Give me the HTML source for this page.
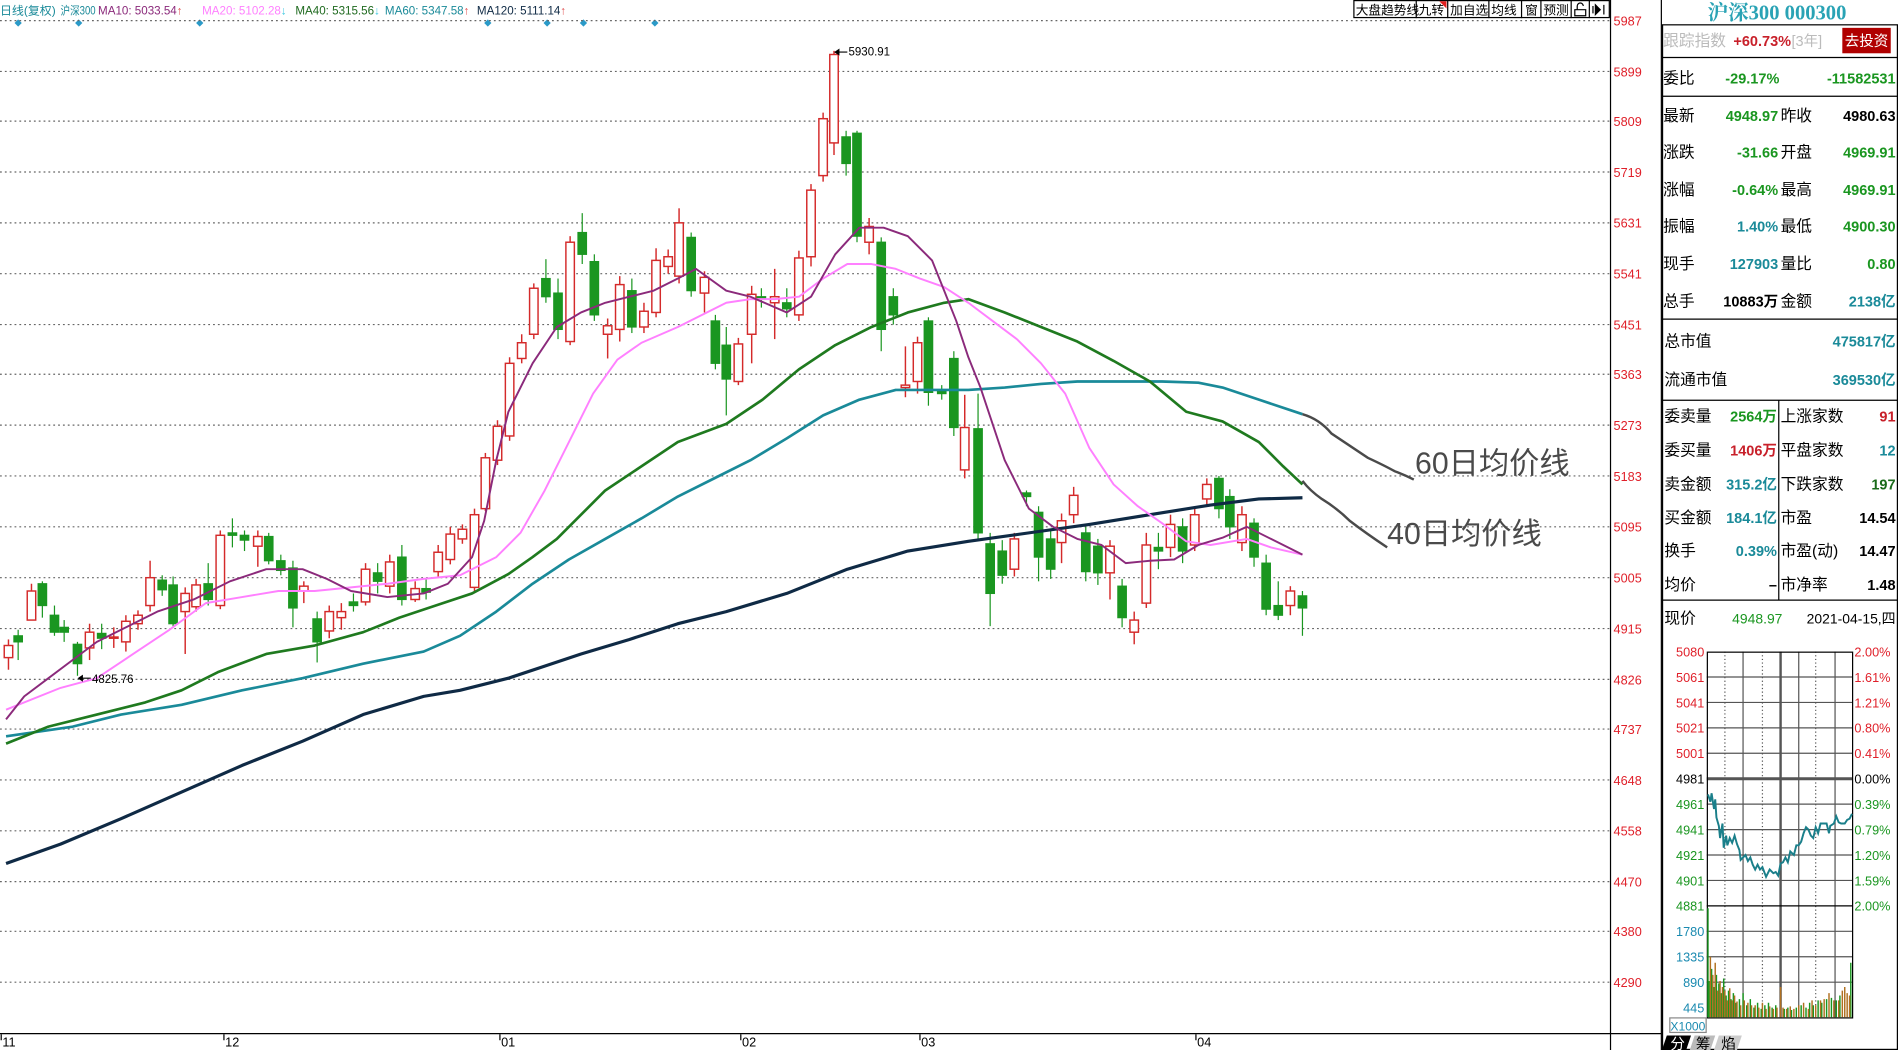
<!DOCTYPE html>
<html><head><meta charset="utf-8"><style>
html,body{margin:0;padding:0;background:#fff;overflow:hidden}
svg{display:block}
text{font-family:"Liberation Sans","Noto Sans CJK SC",sans-serif}
.ax{font-size:10.5px;fill:#e0202a}
.g{stroke:#1a9620;fill:#1a9620;stroke-width:1}
.r{stroke:#d42a2a;fill:#fff;stroke-width:1.2}
.rl{font-size:13px;fill:#000}
</style></head><body>
<svg width="1898" height="1050" viewBox="0 0 1568 867" preserveAspectRatio="none" xmlns="http://www.w3.org/2000/svg">
<rect width="1568" height="867" fill="#fff"/>
<!-- header -->
<g font-size="9.6">
<text x="0" y="12" fill="#1a8a99" textLength="46" lengthAdjust="spacingAndGlyphs">日线(复权)</text>
<text x="50" y="12" fill="#1a8a99" textLength="29" lengthAdjust="spacingAndGlyphs">沪深300</text>
<text x="81" y="12"><tspan fill="#8b2a7b">MA10: 5033.54</tspan><tspan fill="#e05050">↑</tspan></text>
<text x="167" y="12"><tspan fill="#ff80ff">MA20: 5102.28</tspan><tspan fill="#40c8e0">↓</tspan></text>
<text x="244" y="12"><tspan fill="#1f6a1f">MA40: 5315.56</tspan><tspan fill="#40c8e0">↓</tspan></text>
<text x="318" y="12"><tspan fill="#1a8a99">MA60: 5347.58</tspan><tspan fill="#e05050">↑</tspan></text>
<text x="394" y="12"><tspan fill="#0f2a45">MA120: 5111.14</tspan><tspan fill="#e05050">↑</tspan></text>
</g>
<g fill="#2a9ac8"><path d="M15 16l3 3-3 3-3-3z M65 16l3 3-3 3-3-3z M165 16l3 3-3 3-3-3z M403 16l3 3-3 3-3-3z M452 16l3 3-3 3-3-3z M482 16l3 3-3 3-3-3z M541 16l3 3-3 3-3-3z"/></g>
<!-- grid -->
<g stroke="#666" stroke-width="1" stroke-dasharray="1.5 2.5">
<path d="M0 17H1330M0 59H1330M0 100H1330M0 142H1330M0 184H1330M0 226H1330M0 268H1330M0 309H1330M0 351H1330M0 393H1330M0 435H1330M0 477H1330M0 519H1330M0 561H1330M0 602H1330M0 644H1330M0 686H1330M0 728H1330M0 769H1330M0 811H1330"/>
</g>
<!-- toolbar -->
<g font-size="10.5" fill="#000">
<rect x="1118.5" y="0.5" width="211" height="14" fill="#fff" stroke="#000"/>
<path d="M1170 0V15M1196 0V15M1230 0V15M1257 0V15M1273 0V15M1298 0V15M1313 0V15" stroke="#000"/>
<path d="M1189 1h6v6z" fill="#e02020"/>
<text x="1120" y="12">大盘趋势线</text><text x="1172" y="12">九转</text><text x="1198" y="12">加自选</text><text x="1232" y="12">均线</text><text x="1260" y="12">窗</text><text x="1275" y="12">预测</text>
<path d="M1301 13V8h9v5zM1303 8V5a2.5 2.5 0 0 1 5 0" fill="none" stroke="#000"/>
<path d="M1316 5v6M1318 4l4 4-4 4zM1325 4v8" stroke="#000" fill="#000"/>
</g>
<!-- axis -->
<path d="M1330.5 0V867M0 853.5H1372M1372.5 0V867" stroke="#000" fill="none"/>
<g class="ax">
<text x="1333" y="21">5987</text><text x="1333" y="63">5899</text><text x="1333" y="104">5809</text><text x="1333" y="146">5719</text><text x="1333" y="188">5631</text><text x="1333" y="230">5541</text><text x="1333" y="272">5451</text><text x="1333" y="313">5363</text><text x="1333" y="355">5273</text><text x="1333" y="397">5183</text><text x="1333" y="439">5095</text><text x="1333" y="481">5005</text><text x="1333" y="523">4915</text><text x="1333" y="565">4826</text><text x="1333" y="606">4737</text><text x="1333" y="648">4648</text><text x="1333" y="690">4558</text><text x="1333" y="732">4470</text><text x="1333" y="773">4380</text><text x="1333" y="815">4290</text>
</g>
<g font-size="10.5" fill="#000">
<path d="M1 854v5M185 854v5M413 854v5M612 854v5M760 854v5M988 854v5" stroke="#000"/>
<text x="2" y="864">11</text><text x="186" y="864">12</text><text x="414" y="864">01</text><text x="613" y="864">02</text><text x="761" y="864">03</text><text x="989" y="864">04</text>
</g>
<!-- candles -->
<g id="c">
<g class="r"><path d="M7 528V553"/><rect x="3.5" y="533" width="7" height="10"/></g>
<g class="g"><path d="M15 520V545"/><rect x="11.5" y="525" width="7" height="5"/></g>
<g class="r"><path d="M26 482V512"/><rect x="22.5" y="488" width="7" height="24"/></g>
<g class="g"><path d="M35 480V510"/><rect x="31.5" y="482" width="7" height="18"/></g>
<g class="g"><path d="M45 500V525"/><rect x="41.5" y="508" width="7" height="14"/></g>
<g class="g"><path d="M53 512V530"/><rect x="49.5" y="518" width="7" height="4"/></g>
<g class="g"><path d="M64 530V558"/><rect x="60.5" y="532" width="7" height="16"/></g>
<g class="r"><path d="M74 515V545"/><rect x="70.5" y="522" width="7" height="13"/></g>
<g class="g"><path d="M84 515V536"/><rect x="80.5" y="523" width="7" height="4"/></g>
<g class="r"><path d="M94 518V535"/><rect x="90.5" y="526" width="7" height="1"/></g>
<g class="r"><path d="M104 508V538"/><rect x="100.5" y="513" width="7" height="17"/></g>
<g class="r"><path d="M114 504V520"/><rect x="110.5" y="508" width="7" height="7"/></g>
<g class="r"><path d="M124 463V505"/><rect x="120.5" y="477" width="7" height="23"/></g>
<g class="g"><path d="M134 475V492"/><rect x="130.5" y="479" width="7" height="8"/></g>
<g class="g"><path d="M143 476V518"/><rect x="139.5" y="483" width="7" height="32"/></g>
<g class="r"><path d="M153 485V540"/><rect x="149.5" y="490" width="7" height="15"/></g>
<g class="r"><path d="M162 478V505"/><rect x="158.5" y="483" width="7" height="18"/></g>
<g class="g"><path d="M172 465V500"/><rect x="168.5" y="482" width="7" height="13"/></g>
<g class="r"><path d="M182 438V503"/><rect x="178.5" y="442" width="7" height="58"/></g>
<g class="g"><path d="M192 428V452"/><rect x="188.5" y="440" width="7" height="2"/></g>
<g class="g"><path d="M202 438V455"/><rect x="198.5" y="442" width="7" height="4"/></g>
<g class="r"><path d="M213 438V468"/><rect x="209.5" y="443" width="7" height="8"/></g>
<g class="g"><path d="M222 440V466"/><rect x="218.5" y="443" width="7" height="20"/></g>
<g class="g"><path d="M232 458V475"/><rect x="228.5" y="463" width="7" height="8"/></g>
<g class="g"><path d="M242 463V518"/><rect x="238.5" y="469" width="7" height="33"/></g>
<g class="r"><path d="M251 480V498"/><rect x="247.5" y="484" width="7" height="4"/></g>
<g class="g"><path d="M262 505V547"/><rect x="258.5" y="511" width="7" height="19"/></g>
<g class="r"><path d="M272 500V527"/><rect x="268.5" y="505" width="7" height="16"/></g>
<g class="r"><path d="M282 498V520"/><rect x="278.5" y="505" width="7" height="5"/></g>
<g class="g"><path d="M292 490V505"/><rect x="288.5" y="497" width="7" height="3"/></g>
<g class="r"><path d="M302 465V500"/><rect x="298.5" y="470" width="7" height="27"/></g>
<g class="g"><path d="M312 465V490"/><rect x="308.5" y="473" width="7" height="7"/></g>
<g class="r"><path d="M322 458V490"/><rect x="318.5" y="464" width="7" height="20"/></g>
<g class="g"><path d="M332 450V500"/><rect x="328.5" y="460" width="7" height="35"/></g>
<g class="r"><path d="M343 480V497"/><rect x="339.5" y="486" width="7" height="9"/></g>
<g class="g"><path d="M352 478V495"/><rect x="348.5" y="486" width="7" height="3"/></g>
<g class="r"><path d="M362 450V476"/><rect x="358.5" y="456" width="7" height="16"/></g>
<g class="r"><path d="M372 435V466"/><rect x="368.5" y="441" width="7" height="21"/></g>
<g class="r"><path d="M382 433V449"/><rect x="378.5" y="437" width="7" height="8"/></g>
<g class="r"><path d="M392 420V488"/><rect x="388.5" y="425" width="7" height="60"/></g>
<g class="r"><path d="M401 374V422"/><rect x="397.5" y="378" width="7" height="42"/></g>
<g class="r"><path d="M411 347V384"/><rect x="407.5" y="352" width="7" height="28"/></g>
<g class="r"><path d="M421 295V364"/><rect x="417.5" y="300" width="7" height="60"/></g>
<g class="r"><path d="M431 276V300"/><rect x="427.5" y="283" width="7" height="13"/></g>
<g class="r"><path d="M441 234V280"/><rect x="437.5" y="238" width="7" height="38"/></g>
<g class="g"><path d="M451 214V250"/><rect x="447.5" y="230" width="7" height="15"/></g>
<g class="g"><path d="M461 230V280"/><rect x="457.5" y="242" width="7" height="30"/></g>
<g class="r"><path d="M471 195V285"/><rect x="467.5" y="200" width="7" height="82"/></g>
<g class="g"><path d="M481 176V218"/><rect x="477.5" y="192" width="7" height="18"/></g>
<g class="g"><path d="M491 210V265"/><rect x="487.5" y="216" width="7" height="44"/></g>
<g class="r"><path d="M502 263V296"/><rect x="498.5" y="269" width="7" height="7"/></g>
<g class="r"><path d="M512 228V282"/><rect x="508.5" y="235" width="7" height="37"/></g>
<g class="g"><path d="M522 230V275"/><rect x="518.5" y="240" width="7" height="30"/></g>
<g class="r"><path d="M532 250V275"/><rect x="528.5" y="257" width="7" height="13"/></g>
<g class="r"><path d="M542 205V262"/><rect x="538.5" y="215" width="7" height="43"/></g>
<g class="r"><path d="M552 206V226"/><rect x="548.5" y="212" width="7" height="8"/></g>
<g class="r"><path d="M561 172V234"/><rect x="557.5" y="184" width="7" height="44"/></g>
<g class="g"><path d="M571 192V245"/><rect x="567.5" y="196" width="7" height="44"/></g>
<g class="r"><path d="M582 224V258"/><rect x="578.5" y="229" width="7" height="13"/></g>
<g class="g"><path d="M591 260V305"/><rect x="587.5" y="265" width="7" height="35"/></g>
<g class="g"><path d="M600 270V343"/><rect x="596.5" y="285" width="7" height="28"/></g>
<g class="r"><path d="M610 279V318"/><rect x="606.5" y="284" width="7" height="31"/></g>
<g class="r"><path d="M621 236V300"/><rect x="617.5" y="243" width="7" height="33"/></g>
<g class="g"><path d="M629 238V254"/><rect x="625.5" y="245" width="7" height="2"/></g>
<g class="r"><path d="M640 222V280"/><rect x="636.5" y="245" width="7" height="5"/></g>
<g class="g"><path d="M650 238V262"/><rect x="646.5" y="250" width="7" height="5"/></g>
<g class="r"><path d="M660 207V265"/><rect x="656.5" y="213" width="7" height="47"/></g>
<g class="r"><path d="M670 152V220"/><rect x="666.5" y="157" width="7" height="55"/></g>
<g class="r"><path d="M680 93V150"/><rect x="676.5" y="98" width="7" height="47"/></g>
<g class="r"><path d="M689 42V128"/><rect x="685.5" y="45" width="7" height="73"/></g>
<g class="g"><path d="M699 108V145"/><rect x="695.5" y="113" width="7" height="22"/></g>
<g class="g"><path d="M708 108V200"/><rect x="704.5" y="110" width="7" height="85"/></g>
<g class="r"><path d="M718 180V210"/><rect x="714.5" y="187" width="7" height="13"/></g>
<g class="g"><path d="M728 196V290"/><rect x="724.5" y="200" width="7" height="72"/></g>
<g class="g"><path d="M738 238V268"/><rect x="734.5" y="245" width="7" height="15"/></g>
<g class="r"><path d="M748 286V328"/><rect x="744.5" y="318" width="7" height="2"/></g>
<g class="r"><path d="M758 278V325"/><rect x="754.5" y="283" width="7" height="32"/></g>
<g class="g"><path d="M767 262V335"/><rect x="763.5" y="265" width="7" height="59"/></g>
<g class="g"><path d="M778 318V330"/><rect x="774.5" y="322" width="7" height="3"/></g>
<g class="g"><path d="M788 290V360"/><rect x="784.5" y="296" width="7" height="57"/></g>
<g class="r"><path d="M797 326V395"/><rect x="793.5" y="353" width="7" height="35"/></g>
<g class="g"><path d="M808 325V445"/><rect x="804.5" y="354" width="7" height="86"/></g>
<g class="g"><path d="M818 440V517"/><rect x="814.5" y="449" width="7" height="41"/></g>
<g class="g"><path d="M828 446V482"/><rect x="824.5" y="455" width="7" height="20"/></g>
<g class="r"><path d="M838 440V476"/><rect x="834.5" y="445" width="7" height="25"/></g>
<g class="g"><path d="M848 405V418"/><rect x="844.5" y="407" width="7" height="3"/></g>
<g class="g"><path d="M858 418V480"/><rect x="854.5" y="423" width="7" height="37"/></g>
<g class="g"><path d="M868 438V478"/><rect x="864.5" y="445" width="7" height="25"/></g>
<g class="r"><path d="M877 424V465"/><rect x="873.5" y="430" width="7" height="18"/></g>
<g class="r"><path d="M887 402V432"/><rect x="883.5" y="409" width="7" height="16"/></g>
<g class="g"><path d="M897 435V480"/><rect x="893.5" y="440" width="7" height="32"/></g>
<g class="g"><path d="M907 445V483"/><rect x="903.5" y="451" width="7" height="22"/></g>
<g class="r"><path d="M917 446V495"/><rect x="913.5" y="451" width="7" height="22"/></g>
<g class="g"><path d="M927 478V518"/><rect x="923.5" y="484" width="7" height="26"/></g>
<g class="r"><path d="M937 505V532"/><rect x="933.5" y="512" width="7" height="10"/></g>
<g class="r"><path d="M947 440V502"/><rect x="943.5" y="450" width="7" height="48"/></g>
<g class="g"><path d="M957 440V470"/><rect x="953.5" y="452" width="7" height="3"/></g>
<g class="r"><path d="M967 425V460"/><rect x="963.5" y="433" width="7" height="19"/></g>
<g class="g"><path d="M977 428V465"/><rect x="973.5" y="435" width="7" height="20"/></g>
<g class="r"><path d="M987 418V455"/><rect x="983.5" y="425" width="7" height="25"/></g>
<g class="r"><path d="M997 395V418"/><rect x="993.5" y="400" width="7" height="12"/></g>
<g class="g"><path d="M1007 393V428"/><rect x="1003.5" y="395" width="7" height="25"/></g>
<g class="g"><path d="M1016 404V445"/><rect x="1012.5" y="410" width="7" height="25"/></g>
<g class="r"><path d="M1026 418V455"/><rect x="1022.5" y="425" width="7" height="23"/></g>
<g class="g"><path d="M1036 428V468"/><rect x="1032.5" y="432" width="7" height="28"/></g>
<g class="g"><path d="M1046 458V508"/><rect x="1042.5" y="465" width="7" height="38"/></g>
<g class="g"><path d="M1056 480V512"/><rect x="1052.5" y="500" width="7" height="8"/></g>
<g class="r"><path d="M1066 484V508"/><rect x="1062.5" y="488" width="7" height="12"/></g>
<g class="g"><path d="M1076 488V525"/><rect x="1072.5" y="492" width="7" height="10"/></g>
</g>
<!-- MAs -->
<g fill="none" stroke-linejoin="round">
<polyline stroke="#0f2a45" stroke-width="2.6" points="5,713 50,697 100,676 150,654 200,632 250,612 300,590 350,575 380,570 420,560 450,550 480,540 520,528 560,515 600,505 650,490 700,470 750,455 800,447 850,440 900,433 950,425 1000,417 1040,412 1076,411"/>
<polyline stroke="#1a8a99" stroke-width="2.2" points="5,608 60,600 100,590 150,582 200,570 250,560 300,548 350,538 380,525 410,505 440,482 470,462 500,445 530,428 560,410 590,395 620,380 650,362 680,343 710,330 740,322 770,322 800,322 830,320 860,317 890,315 920,315 960,315 990,316 1010,320 1040,330 1076,342"/>
<polyline stroke="#1f7a1f" stroke-width="2.2" points="5,614 40,600 80,590 120,580 150,570 180,555 220,540 260,533 300,522 330,510 360,500 390,490 420,474 440,460 460,445 480,425 500,405 530,385 560,365 600,350 630,330 660,305 690,285 720,270 750,258 780,250 800,247 830,258 860,270 890,282 920,298 950,315 980,340 1010,348 1040,365 1060,385 1076,400"/>
<polyline stroke="#ff80ff" stroke-width="1.6" points="5,586 50,568 80,560 110,540 140,520 170,498 200,493 230,488 260,488 290,485 320,482 350,478 380,475 410,460 430,440 450,405 470,365 490,325 510,297 530,283 560,270 580,260 600,250 620,247 640,247 660,245 680,230 700,218 720,218 740,222 760,230 780,237 800,250 820,265 840,280 860,300 880,325 900,370 920,400 940,418 960,432 980,447 1000,450 1030,445 1050,452 1076,458"/>
<polyline stroke="#8b2a7b" stroke-width="1.6" points="5,594 20,575 40,560 60,545 80,530 100,520 130,505 160,495 190,480 220,470 250,470 270,478 290,488 320,493 350,490 370,482 390,460 400,430 410,380 420,340 440,300 460,270 480,258 500,250 520,245 540,240 560,230 575,222 600,240 620,245 650,258 670,245 690,210 710,188 730,188 750,195 770,215 790,265 800,295 810,320 830,380 850,420 870,435 890,445 910,450 930,465 950,463 970,462 990,450 1010,444 1030,435 1050,445 1076,458"/>
</g>
<!-- annotation -->
<g fill="none" stroke="#4a4a4a" stroke-width="2">
<path d="M1076 342 Q1090 346 1100 358 Q1115 368 1130 378 Q1145 385 1152 389 Q1160 392 1168 396"/>
<path d="M1076 397 Q1082 405 1092 412 Q1105 420 1115 430 Q1128 440 1146 452"/>
</g>
<text x="1169" y="391" font-size="25" fill="#4a4a4a">60日均价线</text>
<text x="1146" y="449" font-size="25" fill="#4a4a4a">40日均价线</text>
<g font-size="9.5" fill="#000"><path d="M690 43H700M690 43l3-2v4z M65 560H75M65 560l3-2v4z" stroke="#000"/><text x="701" y="46">5930.91</text><text x="76" y="564">4825.76</text></g>

<!-- right panel -->
<text x="1468" y="16" text-anchor="middle" fill="#2aa3b5" style="font-family:'Liberation Serif','Noto Serif CJK SC',serif;font-size:17px;font-weight:bold">沪深300 000300</text>
<g stroke="#000" fill="none">
<rect x="1373.5" y="20.5" width="194" height="846"/>
<path d="M1373 47.5H1568M1373 79.5H1568M1373 263.5H1568M1373 330.5H1568M1373 495.5H1568M1469.5 330V495"/>
</g>
<text x="1374" y="38" font-size="13" fill="#bbb">跟踪指数</text>
<text x="1432" y="38" font-size="12" font-weight="bold" fill="#c8202a">+60.73%</text>
<text x="1480" y="38" font-size="12" fill="#bbb">[3年]</text>
<rect x="1522" y="23" width="40" height="21" fill="#b00000"/>
<text x="1542" y="38" font-size="12" fill="#fff" text-anchor="middle">去投资</text>
<g class="rl">
<text x="1374" y="69">委比</text>
<text x="1374" y="100">最新</text><text x="1374" y="130">涨跌</text><text x="1374" y="161">涨幅</text><text x="1374" y="191">振幅</text><text x="1374" y="222">现手</text><text x="1374" y="253">总手</text>
<text x="1471" y="100">昨收</text><text x="1471" y="130">开盘</text><text x="1471" y="161">最高</text><text x="1471" y="191">最低</text><text x="1471" y="222">量比</text><text x="1471" y="253">金额</text>
<text x="1375" y="286">总市值</text><text x="1375" y="318">流通市值</text>
<text x="1375" y="348">委卖量</text><text x="1375" y="376">委买量</text><text x="1375" y="404">卖金额</text><text x="1375" y="432">买金额</text><text x="1375" y="459">换手</text><text x="1375" y="487">均价</text>
<text x="1471" y="348">上涨家数</text><text x="1471" y="376">平盘家数</text><text x="1471" y="404">下跌家数</text><text x="1471" y="432">市盈</text><text x="1471" y="459">市盈(动)</text><text x="1471" y="487">市净率</text>
<text x="1375" y="515">现价</text>
</g>
<g font-size="12" font-weight="bold" text-anchor="end">
<text x="1470" y="69" fill="#1a9620">-29.17%</text><text x="1566" y="69" fill="#1a9620">-11582531</text>
<text x="1469" y="100" fill="#1a9620">4948.97</text><text x="1566" y="100" fill="#000">4980.63</text>
<text x="1469" y="130" fill="#1a9620">-31.66</text><text x="1566" y="130" fill="#1a9620">4969.91</text>
<text x="1469" y="161" fill="#1a9620">-0.64%</text><text x="1566" y="161" fill="#1a9620">4969.91</text>
<text x="1469" y="191" fill="#1a8a99">1.40%</text><text x="1566" y="191" fill="#1a9620">4900.30</text>
<text x="1469" y="222" fill="#1a8a99">127903</text><text x="1566" y="222" fill="#1a9620">0.80</text>
<text x="1469" y="253" fill="#000">10883万</text><text x="1566" y="253" fill="#1a8a99">2138亿</text>
<text x="1566" y="286" fill="#1a8a99">475817亿</text><text x="1566" y="318" fill="#1a8a99">369530亿</text>
<text x="1468" y="348" fill="#1a9620">2564万</text><text x="1468" y="376" fill="#c8202a">1406万</text><text x="1468" y="404" fill="#1a8a99">315.2亿</text><text x="1468" y="432" fill="#1a8a99">184.1亿</text><text x="1468" y="459" fill="#1a8a99">0.39%</text><text x="1468" y="487" fill="#000">–</text>
<text x="1566" y="348" fill="#c8202a">91</text><text x="1566" y="376" fill="#1a8a99">12</text><text x="1566" y="404" fill="#1a6a1a">197</text><text x="1566" y="432" fill="#000">14.54</text><text x="1566" y="459" fill="#000">14.47</text><text x="1566" y="487" fill="#000">1.48</text>
</g>
<text x="1431" y="515" font-size="11.5" fill="#1a9620">4948.97</text>
<text x="1566" y="515" font-size="11.5" fill="#000" text-anchor="end">2021-04-15,四</text>
<!-- intraday -->
<g stroke="#555" fill="none" stroke-width="1">
<path d="M1410 559H1530M1410 580H1530M1410 601H1530M1410 622H1530M1410 664H1530M1410 685H1530M1410 706H1530M1410 727H1530M1410 769H1530M1410 790H1530M1410 811H1530M1440 538V840M1486 538V840M1516 538V840"/>
<path d="M1425 538V840M1456 538V840M1500 538V840" stroke-dasharray="1 2"/>
<path d="M1471 538V840" stroke-width="2"/>
<path d="M1410 643H1530" stroke-width="2.5"/>
<rect x="1410.5" y="538.5" width="120" height="302" stroke="#000"/>
<path d="M1410 748H1530" stroke="#000"/>
</g>
<g font-size="10.5" text-anchor="end">
<text x="1408" y="542" fill="#e0202a">5080</text><text x="1408" y="563" fill="#e0202a">5061</text><text x="1408" y="584" fill="#e0202a">5041</text><text x="1408" y="605" fill="#e0202a">5021</text><text x="1408" y="626" fill="#e0202a">5001</text><text x="1408" y="647" fill="#000">4981</text><text x="1408" y="668" fill="#1a9620">4961</text><text x="1408" y="689" fill="#1a9620">4941</text><text x="1408" y="710" fill="#1a9620">4921</text><text x="1408" y="731" fill="#1a9620">4901</text><text x="1408" y="752" fill="#1a9620">4881</text>
<text x="1408" y="773" fill="#1a8ab0">1780</text><text x="1408" y="794" fill="#1a8ab0">1335</text><text x="1408" y="815" fill="#1a8ab0">890</text><text x="1408" y="836" fill="#1a8ab0">445</text>
</g>
<g font-size="10.5">
<text x="1532" y="542" fill="#e0202a">2.00%</text><text x="1532" y="563" fill="#e0202a">1.61%</text><text x="1532" y="584" fill="#e0202a">1.21%</text><text x="1532" y="605" fill="#e0202a">0.80%</text><text x="1532" y="626" fill="#e0202a">0.41%</text><text x="1532" y="647" fill="#000">0.00%</text><text x="1532" y="668" fill="#1a9620">0.39%</text><text x="1532" y="689" fill="#1a9620">0.79%</text><text x="1532" y="710" fill="#1a9620">1.20%</text><text x="1532" y="731" fill="#1a9620">1.59%</text><text x="1532" y="752" fill="#1a9620">2.00%</text>
</g>
<rect x="1379.5" y="840.5" width="30" height="12" fill="#fff" stroke="#888"/>
<text x="1380" y="851" font-size="10" fill="#1a8ab0">X1000</text>
<polyline fill="none" stroke="#1a7f8a" stroke-width="1.6" points="1411,656 1413,662 1414,655 1416,668 1417,660 1418,675 1420,682 1421,692 1423,680 1424,700 1426,690 1427,698 1429,692 1431,696 1433,690 1435,697 1437,702 1438,710 1440,708 1442,706 1444,711 1446,708 1448,714 1450,718 1452,714 1454,718 1456,716 1459,724 1462,718 1465,721 1467,720 1469,723 1471,713 1473,712 1475,708 1477,712 1479,703 1482,706 1484,698 1486,698 1488,695 1490,688 1492,683 1494,685 1496,690 1498,692 1500,683 1502,688 1504,680 1507,680 1509,680 1511,688 1512,682 1515,680 1517,674 1519,679 1521,680 1524,680 1526,677 1528,676 1530,672"/>
<g stroke-width="1.2">
<path stroke="#1a9620" d="M1411 750V840M1412 810V840M1414 800V840M1416 815V840M1418 805V840M1420 812V840M1422 820V840M1424 808V840M1426 822V840M1428 818V840M1430 825V840M1432 820V840M1434 828V840M1437 825V840M1440 820V840M1443 830V840M1446 825V840M1449 832V840M1452 828V840M1455 833V840M1458 830V840M1461 828V840M1464 832V840M1467 830V840M1474 833V840M1477 832V840M1480 834V840M1484 832V840M1488 830V840M1492 832V840M1495 828V840M1498 830V840M1502 826V840M1505 828V840M1509 825V840M1513 824V840M1517 826V840M1520 822V840M1529 795V840"/>
<path stroke="#b07020" d="M1413 790V840M1415 805V840M1417 795V840M1419 818V840M1421 810V840M1423 815V840M1425 818V840M1427 826V840M1429 816V840M1431 826V840M1433 822V840M1435 827V840M1438 830V840M1441 826V840M1444 828V840M1447 830V840M1450 830V840M1453 832V840M1456 828V840M1459 833V840M1462 831V840M1465 833V840M1468 832V840M1471 815V840M1473 832V840M1476 833V840M1479 831V840M1482 833V840M1486 830V840M1490 828V840M1494 833V840M1497 826V840M1500 830V840M1504 826V840M1507 825V840M1511 820V840M1515 826V840M1519 826V840M1522 818V840M1524 815V840M1526 820V840M1528 822V840"/>
</g>
<!-- tabs -->
<path d="M1373 867l4-12h20l-4 12z" fill="#000"/>
<path d="M1396 867l4-12h17l-4 12z" fill="#bbb"/>
<path d="M1416 867l4-12h19l-4 12z" fill="#ccc"/>
<text x="1380" y="866" font-size="12" fill="#fff">分</text>
<text x="1401" y="866" font-size="12" fill="#000">筹</text>
<text x="1422" y="866" font-size="12" fill="#000">焰</text>
</svg>
</body></html>
